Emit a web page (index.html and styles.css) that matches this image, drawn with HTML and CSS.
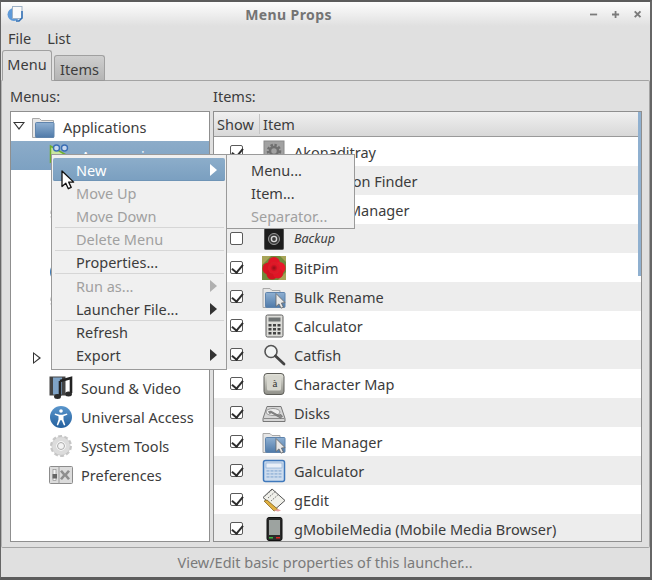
FILE: index.html
```html
<!DOCTYPE html>
<html lang="en">
<head>
<meta charset="utf-8">
<title>Menu Props</title>
<link rel="stylesheet" href="styles.css">
</head>
<body>
<svg class="defs" aria-hidden="true">
  <defs>
    <linearGradient id="gFolder" x1="0" y1="0" x2="0" y2="1"><stop offset="0" stop-color="#8fb0d2"/><stop offset="1" stop-color="#4f7aa9"/></linearGradient>
    <linearGradient id="gKey" x1="0" y1="0" x2="0" y2="1"><stop offset="0" stop-color="#e4e4dc"/><stop offset="1" stop-color="#8f8f88"/></linearGradient>
    <linearGradient id="gBlue" x1="0" y1="0" x2="0" y2="1"><stop offset="0" stop-color="#5a96cc"/><stop offset="1" stop-color="#24609e"/></linearGradient>
    <radialGradient id="gFlower"><stop offset="0" stop-color="#8d0f18"/><stop offset=".6" stop-color="#e01526"/><stop offset="1" stop-color="#d8202a"/></radialGradient>
    <symbol id="i-folder" viewBox="0 0 24 24">
      <path d="M1.5 3.5h7l2 2h12v17h-21z" fill="#e6e6e6" stroke="#a8a8a8"/>
      <rect x="4.5" y="7.5" width="18.5" height="15" rx="1" fill="url(#gFolder)" stroke="#5f84ad"/>
    </symbol>
    <symbol id="i-folder-cursor" viewBox="0 0 24 24">
      <path d="M1 3.5h7l2 2h8v17h-17z" fill="#e6e6e6" stroke="#a8a8a8"/>
      <rect x="3.5" y="7.5" width="19.5" height="15" rx="1" fill="url(#gFolder)" stroke="#5f84ad"/>
      <path d="M14 8.5v13l3-2.6 2 4.3 2.4-1-2-4.2 3.6-.4z" fill="#e8e8e8" stroke="#666" stroke-width=".8"/>
    </symbol>
    <symbol id="i-akonadi" viewBox="0 0 24 24">
      <rect x="2" y="1" width="20" height="22" fill="#a2a2a2" stroke="#8a8a8a"/>
      <circle cx="12" cy="11" r="6" fill="none" stroke="#6f6f6f" stroke-width="2.5" stroke-dasharray="2.4 1.6"/>
      <circle cx="12" cy="11" r="4" fill="none" stroke="#6f6f6f" stroke-width="2.5"/>
    </symbol>
    <symbol id="i-backup" viewBox="0 0 24 24">
      <rect x="2.5" y="1.5" width="19" height="21" rx="1" fill="#1d1d1d" stroke="#555"/>
      <circle cx="12" cy="12" r="5.5" fill="#3b3b3b" stroke="#9a9a9a"/>
      <circle cx="12" cy="12" r="2.6" fill="none" stroke="#d8d8d8" stroke-width="1.4"/>
    </symbol>
    <symbol id="i-bitpim" viewBox="0 0 24 24">
      <rect width="24" height="24" fill="#6f8a3c"/>
      <path d="M0 0h9L0 9zM24 24h-8l8-8zM24 0v6l-6-6z" fill="#a8a458"/>
      <circle cx="12" cy="7" r="6" fill="#e01526"/><circle cx="6.5" cy="12.5" r="6" fill="#d81422"/><circle cx="17.5" cy="12" r="6" fill="#e81a2a"/><circle cx="10" cy="18" r="5.5" fill="#d01420"/><circle cx="16" cy="17.5" r="5" fill="#e01526"/>
      <circle cx="12" cy="12" r="6" fill="url(#gFlower)"/>
    </symbol>
    <symbol id="i-calc" viewBox="0 0 24 24">
      <rect x="4" y="1" width="17" height="22" rx="1.5" fill="#dcdcd8" stroke="#5c5c5c"/>
      <rect x="6.5" y="3.5" width="12" height="4" fill="#6e7272"/>
      <path d="M6.5 10h3v2.5h-3zM11 10h3v2.5h-3zM15.500 10h3v2.500h-3zM6.500 14h3v2.500h-3zM11 14h3v2.500h-3zM15.500 14h3v2.500h-3zM6.500 18h3v2.500h-3zM11 18h3v2.500h-3zM15.500 18h3v2.500h-3z" fill="#444"/>
    </symbol>
    <symbol id="i-search" viewBox="0 0 24 24">
      <circle cx="9" cy="8.500" r="6" fill="#f2f4f4" stroke="#555" stroke-width="1.600"/>
      <path d="M13.500 13l8.500 8" stroke="#444" stroke-width="2.800" stroke-linecap="round"/>
    </symbol>
    <symbol id="i-charmap" viewBox="0 0 24 24">
      <rect x="2" y="1.500" width="20" height="21" rx="3" fill="url(#gKey)" stroke="#5d5d58"/>
      <rect x="5" y="3.500" width="14" height="15" rx="1.500" fill="#d6d6ce"/>
      <text x="13" y="15" class="keyglyph">à</text>
    </symbol>
    <symbol id="i-disks" viewBox="0 0 24 24">
      <path d="M5 5.500h14l4 12v3h-22v-3z" fill="#d6d6d6" stroke="#777"/>
      <path d="M1.500 17.500h21" stroke="#8a8a8a"/>
      <ellipse cx="11" cy="11" rx="7" ry="3.500" fill="#eee" stroke="#999"/>
      <path d="M9 10l7 4 3-.5 1.500 2-2 1.500-2-1-7-4-2 .5-1-2z" fill="#8a8a8a" stroke="#555" stroke-width=".5"/>
    </symbol>
    <symbol id="i-galc" viewBox="0 0 24 24">
      <rect x="1.500" y="1.500" width="21" height="21" rx="2" fill="#cddcee" stroke="#3f78bb" stroke-width="1.500"/>
      <rect x="4" y="4" width="16" height="5" fill="#eaf0f8" stroke="#7ea4cf" stroke-width=".6"/>
      <path d="M4.500 11h15v1.800h-15zM4.500 14h15v1.800h-15zM4.500 17h15v1.800h-15z" fill="#9fbbdc"/>
      <path d="M8 11v8M12 11v8M16 11v8" stroke="#cddcee"/>
    </symbol>
    <symbol id="i-gedit" viewBox="0 0 24 24">
      <path d="M1 9.500L10 1l13 11.500-9 8z" fill="#f0f0ea" stroke="#555"/>
      <path d="M3 8l8-7M6 10l8-7M9 13l8-7" stroke="#777" stroke-dasharray="1.500 1"/>
      <path d="M2 13l3-1 11 9.500-4 1.500z" fill="#e0b040" stroke="#7a5a18" stroke-width=".7"/>
      <path d="M12 22.500l4-1.500 3 1.500-3 1z" fill="#e7a0a0"/>
    </symbol>
    <symbol id="i-mobile" viewBox="0 0 24 24">
      <rect x="5" y=".500" width="15" height="23" rx="2" fill="#2a2a2a" stroke="#111"/>
      <rect x="7" y="3" width="11" height="15" fill="#9da3a0"/>
      <rect x="7" y="20" width="4" height="1.500" fill="#3cb043"/>
      <rect x="14" y="20" width="4" height="1.500" fill="#d22"/>
    </symbol>
    <symbol id="i-accessories" viewBox="0 0 24 24">
      <path d="M1.500 2v16l14-8z" fill="#c9e6a2" stroke="#6fae2e" stroke-width="1.500"/>
      <circle cx="7.500" cy="4" r="3" fill="#c8d8ee" stroke="#3b6fb5" stroke-width="1.400"/>
      <circle cx="15.500" cy="4" r="3" fill="#c8d8ee" stroke="#3b6fb5" stroke-width="1.400"/>
    </symbol>
    <symbol id="i-av" viewBox="0 0 24 24">
      <rect x="1" y="1" width="15" height="18" fill="#7fa3c6" stroke="#444"/>
      <path d="M1 1h3v18H1zM13 1h3v18h-3z" fill="#444"/>
      <path d="M11 5l11-3v15" fill="none" stroke="#222" stroke-width="2.600"/>
      <path d="M11 5v15" stroke="#222" stroke-width="2.600"/>
      <ellipse cx="8.500" cy="20.500" rx="3.500" ry="2.500" fill="#2b2b2b"/>
      <ellipse cx="19.500" cy="18" rx="3.500" ry="2.500" fill="#2b2b2b"/>
    </symbol>
    <symbol id="i-access" viewBox="0 0 24 24">
      <circle cx="12" cy="12" r="11" fill="url(#gBlue)"/>
      <circle cx="12" cy="6" r="1.800" fill="#fff"/>
      <path d="M6 8.500l4.500 1.300h3L18 8.500l.4 1.200-3.900 1.500v3.300l1.800 5.500-1.300.4-2.300-5.100h-1.400l-2.300 5.100-1.300-.4 1.800-5.500v-3.300L5.600 9.700z" fill="#fff"/>
    </symbol>
    <symbol id="i-gear" viewBox="0 0 24 24">
      <circle cx="12" cy="12" r="9" fill="none" stroke="#c8c8c8" stroke-width="4" stroke-dasharray="3.500 2.150"/>
      <circle cx="12" cy="12" r="7" fill="none" stroke="#dcdcdc" stroke-width="4.500"/>
      <circle cx="12" cy="12" r="3.500" fill="#f4f4f4" stroke="#aaa"/>
      <circle cx="12" cy="12" r="9.300" fill="none" stroke="#b4b4b4" stroke-width=".4"/>
    </symbol>
    <symbol id="i-prefs" viewBox="0 0 24 24">
      <rect x=".5" y="3.500" width="23" height="17" rx="1" fill="#dcdcdc" stroke="#8c8c8c"/>
      <path d="M10 3.500v17" stroke="#9a9a9a"/>
      <rect x="4" y="6.500" width="3" height="11" fill="#f4f4f4" stroke="#888" stroke-width=".6"/>
      <rect x="3.500" y="11" width="4.500" height="4.500" fill="#666"/>
      <path d="M13 7l3 3.500L19 7l2 1.500-3 3.500 3 3.500-2 1.500-3-3.500-3 3.500-2-1.500 3-3.500-3-3.500z" fill="#8f8f8f"/>
    </symbol>
  </defs>
</svg>

<div class="window">
  <header class="titlebar">
    <svg class="app-icon" viewBox="0 0 18 16" aria-hidden="true">
      <circle cx="7" cy="8.500" r="6.500" fill="#5f9ad8"/>
      <rect x="5.500" y=".500" width="9.500" height="12" fill="#fafafa" stroke="#9fb2c6"/>
      <path d="M15 5v7l-3 3H9" fill="none" stroke="#2f6fb5" stroke-width="1.500"/>
    </svg>
    <h1 class="title">Menu Props</h1>
    <div class="win-buttons">
      <svg class="win-btn" viewBox="0 0 9 9" aria-hidden="true"><path d="M0 4.500h8" stroke="#7b7b7b" stroke-width="2"/></svg>
      <svg class="win-btn" viewBox="0 0 9 9" aria-hidden="true"><path d="M0 4.500h8M4 .5v8" stroke="#7b7b7b" stroke-width="2"/></svg>
      <svg class="win-btn" viewBox="0 0 9 9" aria-hidden="true"><path d="M.8 1l6.500 6.500M7.300 1L.8 7.500" stroke="#7b7b7b" stroke-width="2.200"/></svg>
    </div>
  </header>

  <nav class="menubar"><span>File</span><span>List</span></nav>

  <div class="tabs">
    <div class="tab tab-active">Menu</div>
    <div class="tab">Items</div>
  </div>

  <main class="panel">
    <section class="menus-col">
      <div class="col-label">Menus:</div>
      <div class="frame tree">
        <div class="tree-row root"><span class="tri tri-open"></span><svg class="icon"><use href="#i-folder"/></svg><span>Applications</span></div>
        <div class="tree-row selected"><svg class="icon"><use href="#i-accessories"/></svg><span>Accessories</span></div>
        <div class="tree-row"><svg class="icon"></svg><span>Development</span></div>
        <div class="tree-row"><svg class="icon"><use href="#i-gear"/></svg><span>Education</span></div>
        <div class="tree-row"><svg class="icon"><use href="#i-mobile"/></svg><span>Games</span></div>
        <div class="tree-row"><svg class="icon"><use href="#i-access"/></svg><span>Graphics</span></div>
        <div class="tree-row"><svg class="icon"><use href="#i-gear"/></svg><span>Internet</span></div>
        <div class="tree-row"><svg class="icon"></svg><span>Office</span></div>
        <div class="tree-row has-tri"><span class="tri tri-closed"></span><svg class="icon"></svg><span>Other</span></div>
        <div class="tree-row"><svg class="icon"><use href="#i-av"/></svg><span>Sound &amp; Video</span></div>
        <div class="tree-row"><svg class="icon"><use href="#i-access"/></svg><span>Universal Access</span></div>
        <div class="tree-row"><svg class="icon"><use href="#i-gear"/></svg><span>System Tools</span></div>
        <div class="tree-row"><svg class="icon"><use href="#i-prefs"/></svg><span>Preferences</span></div>
      </div>
    </section>

    <section class="items-col">
      <div class="col-label">Items:</div>
      <div class="frame list">
        <div class="list-head"><span class="head-show">Show</span><span class="head-item">Item</span></div>
        <div class="row"><span class="check on"></span><svg class="icon"><use href="#i-akonadi"/></svg><span>Akonaditray</span></div>
        <div class="row alt"><span class="check on"></span><svg class="icon"><use href="#i-search"/></svg><span>Application Finder</span></div>
        <div class="row"><span class="check on"></span><svg class="icon"><use href="#i-folder"/></svg><span>Archive Manager</span></div>
        <div class="row alt off-row"><span class="check"></span><svg class="icon"><use href="#i-backup"/></svg><span>Backup</span></div>
        <div class="row"><span class="check on"></span><svg class="icon"><use href="#i-bitpim"/></svg><span>BitPim</span></div>
        <div class="row alt"><span class="check on"></span><svg class="icon"><use href="#i-folder-cursor"/></svg><span>Bulk Rename</span></div>
        <div class="row"><span class="check on"></span><svg class="icon"><use href="#i-calc"/></svg><span>Calculator</span></div>
        <div class="row alt"><span class="check on"></span><svg class="icon"><use href="#i-search"/></svg><span>Catfish</span></div>
        <div class="row"><span class="check on"></span><svg class="icon"><use href="#i-charmap"/></svg><span>Character Map</span></div>
        <div class="row alt"><span class="check on"></span><svg class="icon"><use href="#i-disks"/></svg><span>Disks</span></div>
        <div class="row"><span class="check on"></span><svg class="icon"><use href="#i-folder-cursor"/></svg><span>File Manager</span></div>
        <div class="row alt"><span class="check on"></span><svg class="icon"><use href="#i-galc"/></svg><span>Galculator</span></div>
        <div class="row"><span class="check on"></span><svg class="icon"><use href="#i-gedit"/></svg><span>gEdit</span></div>
        <div class="row alt"><span class="check on"></span><svg class="icon"><use href="#i-mobile"/></svg><span>gMobileMedia (Mobile Media Browser)</span></div>
        <div class="overlay-scroll"></div>
      </div>
    </section>
  </main>

  <footer class="statusbar">View/Edit basic properties of this launcher...</footer>

  <div class="popup main-popup">
    <div class="mi active"><span>New</span><span class="arrow"></span></div>
    <div class="mi dim"><span>Move Up</span></div>
    <div class="mi dim"><span>Move Down</span></div>
    <div class="sep"></div>
    <div class="mi dim short"><span>Delete Menu</span></div>
    <div class="sep"></div>
    <div class="mi short"><span>Properties...</span></div>
    <div class="sep"></div>
    <div class="mi dim"><span>Run as...</span><span class="arrow"></span></div>
    <div class="mi"><span>Launcher File...</span><span class="arrow"></span></div>
    <div class="sep"></div>
    <div class="mi short"><span>Refresh</span></div>
    <div class="mi"><span>Export</span><span class="arrow"></span></div>
  </div>
  <div class="popup sub-popup">
    <div class="mi"><span>Menu...</span></div>
    <div class="mi"><span>Item...</span></div>
    <div class="mi dim"><span>Separator...</span></div>
  </div>
  <svg class="cursor" viewBox="0 0 14 20" aria-hidden="true">
    <path d="M1 1v15.500l3.800-3.300 2.500 5.500 2.900-1.300-2.500-5.300h5z" fill="#fff" stroke="#111" stroke-width="1.300" stroke-linejoin="round"/>
  </svg>
</div>
</body>
</html>
```

FILE: styles.css
```css
* { box-sizing: border-box; margin: 0; padding: 0; }
html, body { width: 652px; height: 580px; overflow: hidden; }
body {
  font-family: "Noto Sans", "Open Sans", sans-serif;
  font-size: 14.5px;
  color: #3c3c3c;
  background: #e0e0e0;
}
.defs { position: absolute; width: 0; height: 0; }
.keyglyph { font-family: "Liberation Serif", serif; font-size: 11px; fill: #333; text-anchor: middle; }

.window {
  position: relative;
  width: 652px;
  height: 580px;
  display: flex;
  flex-direction: column;
  border-top: 2px solid #5c5c5c;
  border-left: 1px solid #666;
  border-right: 2px solid #666;
  border-bottom: 3px solid #5c5c5c;
  background: #e0e0e0;
}

.titlebar {
  height: 24px;
  flex: none;
  display: flex;
  align-items: center;
  padding: 0 8px 0 6px;
  background: linear-gradient(#fdfdfd, #e0e0e0);
  position: relative;
}
.app-icon { width: 18px; height: 16px; }
.title {
  flex: 1;
  text-align: center;
  font-size: 14px;
  font-weight: 700;
  color: #747474;
  letter-spacing: .4px;
  padding-right: 38px;
}
.win-buttons { display: flex; gap: 14px; }
.win-btn { width: 8px; height: 9px; }

.menubar {
  height: 24px;
  flex: none;
  display: flex;
  gap: 16px;
  padding-left: 7px;
  align-items: center;
}

.tabs {
  height: 31px;
  flex: none;
  display: flex;
  align-items: flex-end;
  gap: 2px;
  padding-left: 1px;
  margin-bottom: -1px;
  position: relative;
  z-index: 1;
}
.tab {
  width: 51px;
  height: 26px;
  border: 1px solid #a0a0a0;
  border-bottom: 1px solid #999;
  border-radius: 3px 3px 0 0;
  background: linear-gradient(#cfcfcf, #b4b4b4);
  text-align: center;
  line-height: 26px;
}
.tab-active {
  width: 50px;
  height: 31px;
  background: #e0e0e0;
  border-bottom-color: #e0e0e0;
  line-height: 27px;
}

.panel {
  height: 468px;
  flex: none;
  display: flex;
  gap: 3px;
  padding: 0 7px 0 8px;
  margin: 0 0 0 0;
  border: 1px solid #a4a4a4;
  border-left-color: #b4b4b4;
  border-radius: 0 2px 2px 2px;
}
.menus-col { width: 200px; flex: none; display: flex; flex-direction: column; }
.items-col { flex: 1; display: flex; flex-direction: column; min-width: 0; }
.col-label { height: 30px; line-height: 30px; flex: none; }
.frame { border: 1px solid #8f8f8f; background: #fff; height: 431px; overflow: hidden; }

.tree-row {
  height: 29px;
  display: flex;
  align-items: center;
  gap: 8px;
  padding-left: 38px;
  position: relative;
}
.tree-row.root { padding-left: 20px; }
.tree-row.selected { background: linear-gradient(#8cacc9, #7da1c2); color: #fff; }
.icon { width: 24px; height: 24px; flex: none; }
.tri { position: absolute; width: 0; height: 0; }
.tri-open {
  left: 2px; top: 10px;
  border-left: 6px solid transparent;
  border-right: 6px solid transparent;
  border-top: 8px solid #333;
}
.tri-open::after {
  content: "";
  position: absolute;
  left: -4px; top: -7px;
  border-left: 4px solid transparent;
  border-right: 4px solid transparent;
  border-top: 5px solid #fff;
}
.tri-closed {
  left: 22px; top: 8px;
  border-top: 6px solid transparent;
  border-bottom: 6px solid transparent;
  border-left: 8px solid #333;
}
.tri-closed::after {
  content: "";
  position: absolute;
  left: -7px; top: -4px;
  border-top: 4px solid transparent;
  border-bottom: 4px solid transparent;
  border-left: 5px solid #fff;
}

.list { position: relative; }
.list-head {
  height: 25px;
  display: flex;
  align-items: center;
  background: linear-gradient(#f0f0f0, #e4e4e4 50%, #d8d8d8);
  border-bottom: 1px solid #999;
}
.head-show { width: 46px; padding-left: 3px; border-right: 1px solid #c4c4c4; line-height: 20px; }
.head-item { padding-left: 3px; }
.row {
  height: 29px;
  display: flex;
  align-items: center;
  padding-left: 16px;
}
.row.alt { background: #ededed; }
.row .icon { margin-left: 19px; margin-right: 8px; }
.off-row > span:last-child { font-style: italic; font-size: 12.500px; }
.check {
  width: 13px;
  height: 13px;
  flex: none;
  background: #fff;
  border: 1px solid #5a5a5a;
  border-radius: 2px;
  position: relative;
}
.check.on::after {
  content: "";
  position: absolute;
  left: 3px;
  top: 0;
  width: 5px;
  height: 9px;
  border-right: 2px solid #2c2c2c;
  border-bottom: 2px solid #2c2c2c;
  transform: rotate(40deg);
}
.overlay-scroll {
  position: absolute;
  right: 0;
  top: 0;
  width: 3px;
  height: 164px;
  background: #8fb0d0;
}

.statusbar {
  flex: 1;
  text-align: center;
  color: #7a7a7a;
  line-height: 29px;
  padding-right: 1px;
}

.popup {
  position: absolute;
  z-index: 5;
  background: #f0f0f0;
  border: 1px solid #9a9a9a;
  padding: 3px 1px;
}
.main-popup { left: 50px; top: 152px; width: 176px; }
.sub-popup { left: 225px; top: 152px; width: 129px; height: 75px; }
.mi {
  height: 23px;
  display: flex;
  align-items: center;
  justify-content: space-between;
  padding: 0 8px 0 23px;
  position: relative;
}
.mi.short { height: 22px; }
.sub-popup .mi { padding-left: 23px; }
.mi.dim { color: #a0a0a0; }
.mi.active {
  background: linear-gradient(#8cadca, #7a9fc0);
  color: #fff;
  border-radius: 2px;
  box-shadow: inset 0 -1px 0 #6f94b6;
}
.sep { height: 1px; background: #d6d6d6; margin: 0 1px 0 2px; }
.arrow {
  width: 0; height: 0;
  border-top: 6px solid transparent;
  border-bottom: 6px solid transparent;
  border-left: 7px solid #333;
}
.dim .arrow { border-left-color: #b0b0b0; }
.active .arrow { border-left-color: #fff; }
.cursor { position: absolute; z-index: 6; left: 60px; top: 168px; width: 14px; height: 20px; }
```
